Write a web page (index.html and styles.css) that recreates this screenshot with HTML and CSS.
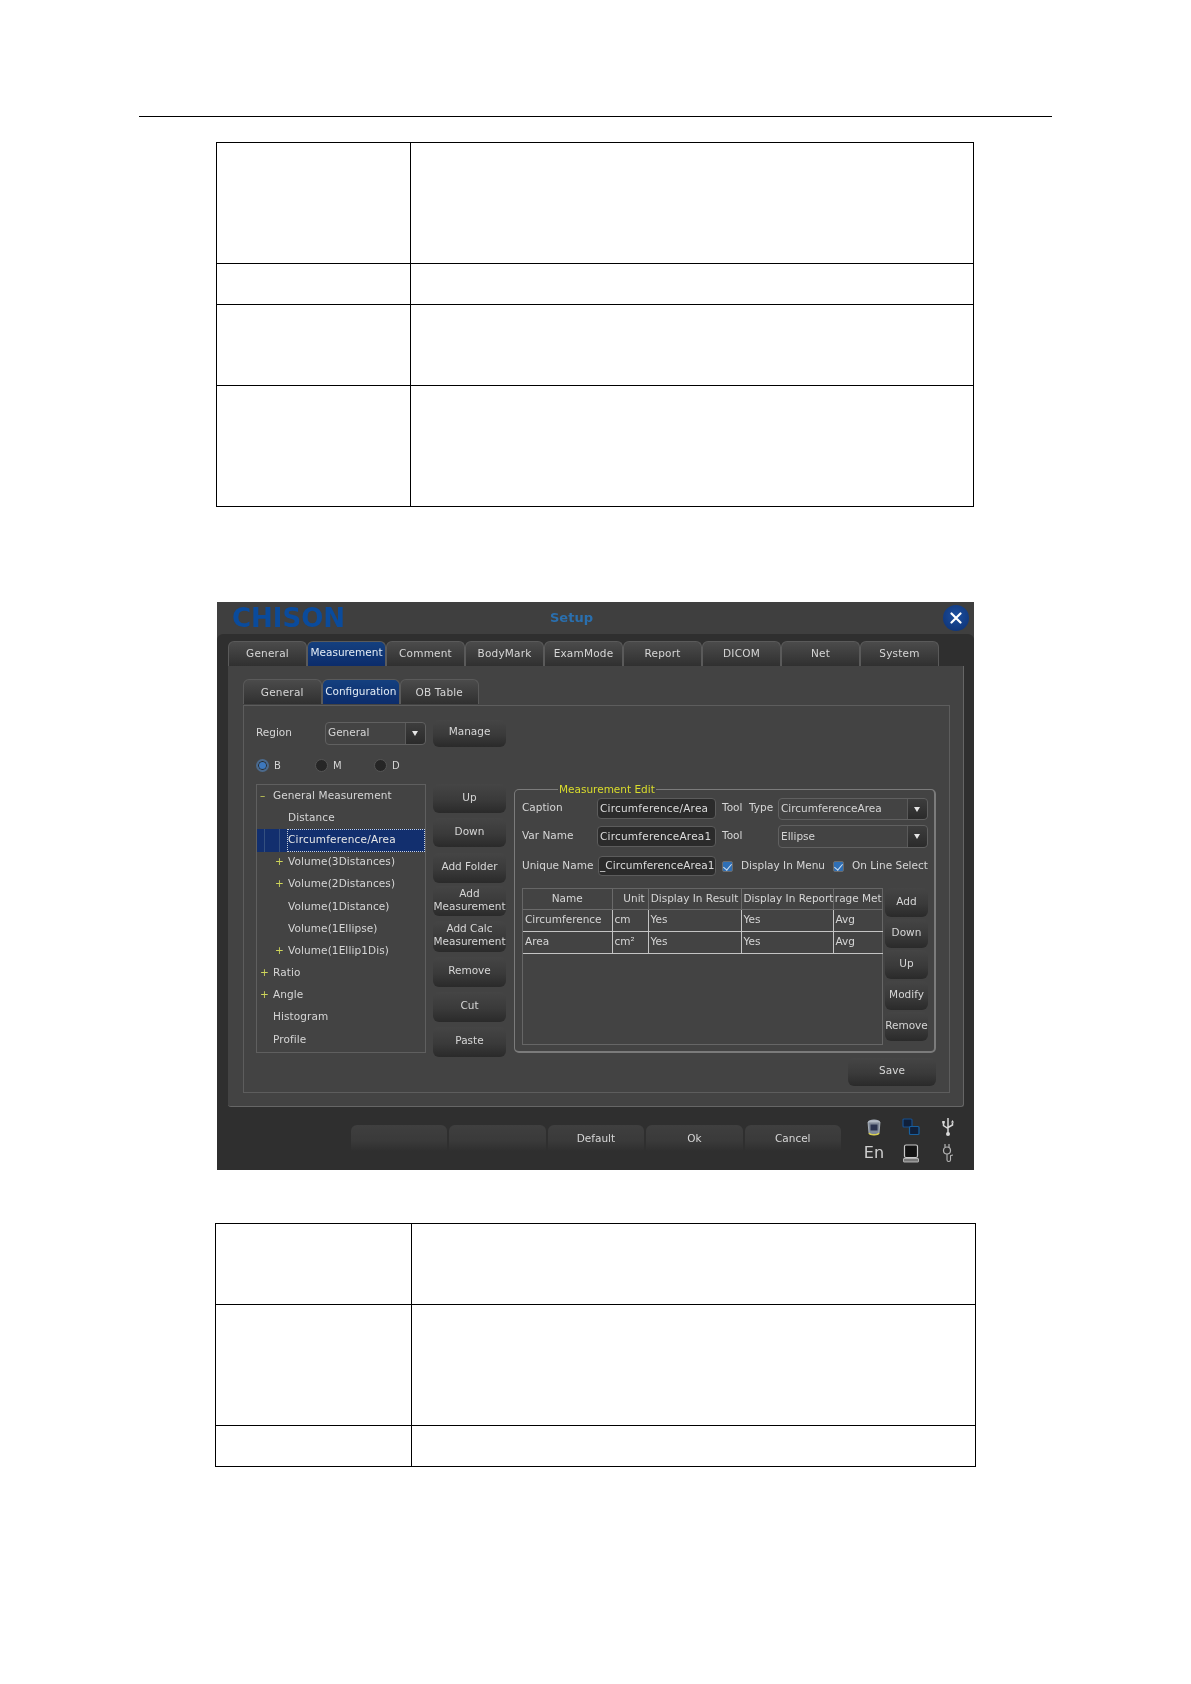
FILE: index.html
```html
<!DOCTYPE html>
<html lang="en">
<head>
<meta charset="utf-8">
<title>Setup</title>
<link rel="stylesheet" href="styles.css">
</head>
<body>
<div class="rule"></div>
<table class="doc doc-top">
  <tr class="h121"><td class="c1"></td><td></td></tr>
  <tr class="h41"><td class="c1"></td><td></td></tr>
  <tr class="h81"><td class="c1"></td><td></td></tr>
  <tr class="h121"><td class="c1"></td><td></td></tr>
</table>

<div class="dialog">
  <div class="titlebar">
    <span class="logo">CHISON</span>
    <span class="title">Setup</span>
    <span class="close">
      <svg width="12" height="12" viewBox="0 0 12 12"><path d="M1.5 1.5L10.5 10.5M10.5 1.5L1.5 10.5" stroke="#fff" stroke-width="2.2" stroke-linecap="round"/></svg>
    </span>
  </div>
  <div class="body">
    <div class="tabs">
      <span class="tab">General</span>
      <span class="tab on">Measurement</span>
      <span class="tab">Comment</span>
      <span class="tab">BodyMark</span>
      <span class="tab">ExamMode</span>
      <span class="tab">Report</span>
      <span class="tab">DICOM</span>
      <span class="tab">Net</span>
      <span class="tab">System</span>
    </div>
    <div class="panel">
      <div class="tabs subtabs">
        <span class="tab">General</span>
        <span class="tab on">Configuration</span>
        <span class="tab">OB Table</span>
      </div>
      <div class="inner">
        <div class="region-row">
          <span class="region-label">Region</span>
          <span class="combo combo-region"><span class="combo-text">General</span><span class="arrow"></span></span>
          <span class="btn btn-main">Manage</span>
        </div>
        <div class="radio-row">
          <span class="radio-item"><span class="radio sel"></span>B</span>
          <span class="radio-item"><span class="radio"></span>M</span>
          <span class="radio-item"><span class="radio"></span>D</span>
        </div>
        <div class="main-row">
          <div class="tree">
            <div class="node lvl0"><span class="mark">–</span><span>General Measurement</span></div>
            <div class="node lvl1"><span class="mark"></span><span>Distance</span></div>
            <div class="node lvl1 picked"><span class="mark"></span><span class="focus">Circumference/Area</span></div>
            <div class="node lvl1"><span class="mark">+</span><span>Volume(3Distances)</span></div>
            <div class="node lvl1"><span class="mark">+</span><span>Volume(2Distances)</span></div>
            <div class="node lvl1"><span class="mark"></span><span>Volume(1Distance)</span></div>
            <div class="node lvl1"><span class="mark"></span><span>Volume(1Ellipse)</span></div>
            <div class="node lvl1"><span class="mark">+</span><span>Volume(1Ellip1Dis)</span></div>
            <div class="node lvl0"><span class="mark">+</span><span>Ratio</span></div>
            <div class="node lvl0"><span class="mark">+</span><span>Angle</span></div>
            <div class="node lvl0"><span class="mark"></span><span>Histogram</span></div>
            <div class="node lvl0"><span class="mark"></span><span>Profile</span></div>
          </div>
          <div class="actions">
            <span class="btn act">Up</span>
            <span class="btn act">Down</span>
            <span class="btn act">Add Folder</span>
            <span class="btn act tight">Add<br>Measurement</span>
            <span class="btn act tight">Add Calc<br>Measurement</span>
            <span class="btn act">Remove</span>
            <span class="btn act">Cut</span>
            <span class="btn act">Paste</span>
          </div>
          <fieldset class="group">
            <legend>Measurement Edit</legend>
            <div class="form-row r1">
              <span class="lbl">Caption</span>
              <span class="input">Circumference/Area</span>
              <span class="lbl2">Tool&nbsp; Type</span>
              <span class="combo combo-wide"><span class="combo-text">CircumferenceArea</span><span class="arrow"></span></span>
            </div>
            <div class="form-row r2">
              <span class="lbl">Var Name</span>
              <span class="input">CircumferenceArea1</span>
              <span class="lbl2">Tool</span>
              <span class="combo combo-wide"><span class="combo-text">Ellipse</span><span class="arrow"></span></span>
            </div>
            <div class="form-row r3">
              <span class="lbl">Unique Name</span>
              <span class="input uniq">_CircumferenceArea1</span>
              <span class="check"></span><span class="chk-label c-a">Display In Menu</span>
              <span class="check"></span><span class="chk-label">On Line Select</span>
            </div>
            <div class="grid-row">
              <div class="grid-box">
                <table class="grid">
                  <colgroup><col class="g1"><col class="g2"><col class="g3"><col class="g4"><col class="g5"></colgroup>
                  <tr class="ghead"><th>Name</th><th class="th-unit">Unit</th><th>Display In Result</th><th>Display In Report</th><th>rage Met</th></tr>
                  <tr><td>Circumference</td><td>cm</td><td>Yes</td><td>Yes</td><td>Avg</td></tr>
                  <tr><td>Area</td><td>cm²</td><td>Yes</td><td>Yes</td><td>Avg</td></tr>
                </table>
              </div>
              <div class="side">
                <span class="btn sbtn">Add</span>
                <span class="btn sbtn">Down</span>
                <span class="btn sbtn">Up</span>
                <span class="btn sbtn">Modify</span>
                <span class="btn sbtn">Remove</span>
              </div>
            </div>
          </fieldset>
        </div>
        <div class="save-row"><span class="btn btn-save">Save</span></div>
      </div>
    </div>
    <div class="footer">
      <div class="foot-btns">
        <span class="btn fbtn"></span>
        <span class="btn fbtn"></span>
        <span class="btn fbtn">Default</span>
        <span class="btn fbtn">Ok</span>
        <span class="btn fbtn">Cancel</span>
      </div>
      <div class="status">
        <span class="st">
          <svg width="14" height="17" viewBox="0 0 14 17"><ellipse cx="7" cy="3" rx="6" ry="2.5" fill="#aeb6c2"/><path d="M1 3L2 14C2.5 16.2 11.5 16.2 12 14L13 3Z" fill="#7f8998" stroke="#b9c1ca" stroke-width=".8"/><rect x="3.5" y="5.5" width="7" height="6" fill="#2a3450"/><path d="M2 14C3 16.4 11 16.4 12 14" stroke="#d8cf52" stroke-width="1.5" fill="none"/></svg>
        </span>
        <span class="st">
          <svg width="18" height="18" viewBox="0 0 18 18"><rect x="1" y="1" width="9" height="8" rx="1" fill="#10203a" stroke="#17508f" stroke-width="1.2"/><rect x="7.5" y="8.5" width="9.5" height="8" rx="1" fill="#10203a" stroke="#17609f" stroke-width="1.2"/></svg>
        </span>
        <span class="st">
          <svg width="14" height="20" viewBox="0 0 14 20"><path d="M7 1V16M2.5 6V8.5L7 11.5M11.5 5.5V8L7 10.5" stroke="#d8d8d8" stroke-width="1.5" fill="none"/><rect x="1.2" y="4" width="2.6" height="2.4" fill="#d8d8d8"/><path d="M10 5.5H13L11.5 3Z" fill="#d8d8d8"/><circle cx="7" cy="17" r="2" fill="#d8d8d8"/></svg>
        </span>
        <span class="st en">En</span>
        <span class="st">
          <svg width="16" height="19" viewBox="0 0 16 19"><rect x="1.5" y="1" width="13" height="12.5" rx="1.5" fill="#141414" stroke="#c9c9c9" stroke-width="1.2"/><rect x="0.5" y="14.5" width="15" height="3.5" rx=".5" fill="#777" stroke="#c9c9c9" stroke-width=".8"/></svg>
        </span>
        <span class="st">
          <svg width="14" height="20" viewBox="0 0 14 20"><path d="M4 1V4M8 1V4" stroke="#b5b5b5" stroke-width="1.2"/><circle cx="6" cy="7.5" r="3.5" fill="none" stroke="#b5b5b5" stroke-width="1.2"/><path d="M6 11V17C6 19 9.5 19 9.5 17V13C9.5 12 11 12 12 12" stroke="#b5b5b5" stroke-width="1.1" fill="none"/></svg>
        </span>
      </div>
    </div>
  </div>
</div>

<table class="doc doc-bottom">
  <tr class="h81"><td class="c1b"></td><td></td></tr>
  <tr class="h121"><td class="c1b"></td><td></td></tr>
  <tr class="h41"><td class="c1b"></td><td></td></tr>
</table>
</body>
</html>
```
FILE: styles.css
```css
* { box-sizing: border-box; }
html, body { margin: 0; padding: 0; background: #fff; }
body { height: 1684px; overflow: hidden; padding-top: 116px; font-family: "DejaVu Sans", sans-serif; }

.rule { height: 1px; margin: 0 139px; background: #000; }

.doc { border-collapse: collapse; table-layout: fixed; }
.doc td { border: 1px solid #000; padding: 0; }
.doc-top { width: 758px; margin: 25px 0 0 216px; }
.doc-bottom { width: 761px; margin: 53px 0 0 215px; }
.c1 { width: 194px; }
.c1b { width: 196px; }
.h121 { height: 121px; }
.h81 { height: 81px; }
.h41 { height: 41px; }

.dialog {
  width: 757px; height: 568px; margin: 95px 0 0 217px;
  display: flex; flex-direction: column;
  background: #3f3f3f; color: #d6d6d6;
  font-size: 10.5px; line-height: 13px;
  filter: blur(0.45px);
}
.titlebar { height: 32px; flex: none; display: flex; align-items: center; padding: 0 5px 0 15px; }
.logo { font-size: 26px; line-height: 30px; font-weight: 700; color: #0a4b9c; width: 114px; }
.title { margin-left: 204px; padding-bottom: 2px; font-size: 13px; font-weight: 700; color: #2a6fae; }
.close {
  margin-left: auto; width: 26px; height: 26px; border-radius: 50%;
  display: flex; align-items: center; justify-content: center;
  background: radial-gradient(circle at 50% 40%, #1c4f9f, #0c2f70);
}

.body { flex: 1; display: flex; flex-direction: column; background: #2f2f2f; border-radius: 6px 6px 0 0; padding: 7px 10px 0 11px; }

.tabs { display: flex; height: 25px; flex: none; }
.tab {
  width: 79px; flex: none; display: flex; align-items: center; justify-content: center;
  border: 1px solid #5a5a5a; border-bottom: 0; border-radius: 6px 6px 0 0;
  background: linear-gradient(#4b4b4b, #303030);
  letter-spacing: 0.2px; padding-bottom: 2px;
}
.tab.on { background: linear-gradient(#14407f, #0c2c6b); color: #e4ecf5; letter-spacing: 0; padding-bottom: 3px; }

.panel { height: 441px; flex: none; background: #434343; border: 1px solid #666; border-width: 0 1px 1px 0; border-radius: 0 0 3px 3px; padding: 13px 13px 0 15px; }
.subtabs .tab { width: 78.5px; padding-bottom: 0; }
.subtabs .tab.on { padding-bottom: 1px; }
.inner { height: 388px; border: 1px solid #5d5d5d; margin-top: 1px; padding: 14px 0 0 12px; }

.btn {
  display: flex; align-items: center; justify-content: center; text-align: center;
  border-radius: 6px; color: #d6d6d6; padding-bottom: 3px;
  background: linear-gradient(#454545, #3a3a3a 55%, #2a2a2a);
}

.region-row { display: flex; align-items: center; height: 27px; }
.region-label { width: 69px; padding-bottom: 2px; }
.combo { display: flex; align-items: stretch; border: 1px solid #606060; border-radius: 4px; height: 23px; }
.combo-text { flex: 1; padding: 0 0 1px 2px; display: flex; align-items: center; }
.arrow { width: 20px; flex: none; position: relative; background: linear-gradient(#3d3d3d, #2b2b2b); border-left: 1px solid #5a5a5a; border-radius: 0 4px 4px 0; }
.arrow::after {
  content: ""; position: absolute; left: 6px; top: 8px;
  border: 3.5px solid transparent; border-top: 5px solid #e6e6e6; border-bottom: 0;
}
.combo-region { width: 101px; }
.combo-region .combo-text { padding-bottom: 2px; }
.btn-main { width: 73px; height: 27px; margin-left: 7px; padding-bottom: 4px; }

.radio-row { display: flex; height: 16px; margin-top: 10px; }
.radio-item { width: 59px; display: flex; align-items: center; gap: 5px; font-size: 10px; }
.radio { width: 13px; height: 13px; border-radius: 50%; background: #262626; border: 1px solid #555; }
.radio.sel { background: #3d78bd; border: 2px solid #4c6a8c; box-shadow: inset 0 0 0 1px #2a2a2a; }

.main-row { display: flex; align-items: flex-start; margin-top: 11px; height: 272px; }
.tree { width: 170px; height: 269px; border: 1px solid #5f5f5f; flex: none; letter-spacing: 0.1px; }
.node { height: 22.2px; display: flex; align-items: center; white-space: nowrap; padding-bottom: 2px; }
.lvl0 { padding-left: 3px; }
.lvl1 { padding-left: 18px; }
.mark { width: 13px; flex: none; color: #cfd65a; }
.picked {
  padding-bottom: 0;
  background:
    linear-gradient(#34507f, #34507f) 7px 0 / 1px 100% no-repeat,
    linear-gradient(#34507f, #34507f) 22px 0 / 1px 100% no-repeat,
    #122f6e;
}
.focus { flex: 1; height: 100%; display: flex; align-items: center; margin-left: -1px; padding: 0 0 2px 1px; outline: 1px dotted #c8d0dc; outline-offset: -1px; color: #e8e8e8; letter-spacing: 0.2px; }

.actions { width: 73px; margin-left: 7px; display: flex; flex-direction: column; flex: none; }
.act { height: 30px; margin-bottom: 5px; }
.act:nth-child(1) { height: 29px; }
.act:nth-child(2) { height: 29px; margin-bottom: 6px; }
.act:nth-child(3) { margin-bottom: 3px; }
.act:nth-child(5) { height: 31px; }
.tight { line-height: 13px; }

.group {
  width: 422px; height: 270px; margin: -1px 0 0 8px; padding: 1px 0 0 7px; min-width: 0; flex: none;
  border: 1px solid #7b7b7b; border-width: 1px 2px 2px 1px; border-radius: 5px;
}
.group legend { margin-left: 36px; padding: 0 1px; font-size: 10.5px; line-height: 12px; color: #d9dc2c; }

.form-row { display: flex; align-items: center; height: 21px; white-space: nowrap; margin-top: 2px; }
.r2 { margin-top: 7px; }
.r3 { margin-top: 9px; height: 20px; }
.lbl { width: 75px; flex: none; padding-bottom: 2px; }
.r3 .lbl { width: 76px; padding-bottom: 1px; }
.input {
  width: 119px; height: 100%; flex: none; padding: 0 0 1px 2px; display: flex; align-items: center;
  border: 1px solid #5c5c5c; border-radius: 4px; background: #2b2b2b; color: #dcdcdc; letter-spacing: 0.22px;
}
.r3 .input { width: 118px; }
.uniq { padding-left: 1px; letter-spacing: 0.1px; }
.lbl2 { width: 62px; flex: none; padding: 0 0 2px 6px; }
.combo-wide { width: 150px; height: 22px; }
.r2 .combo-wide { height: 23px; }
.check { width: 11px; height: 11px; flex: none; margin: 0 8px 0 6px; background: #2f6fb5; border: 1px solid #6a6a6a; border-radius: 2px; position: relative; }
.check::after { content: ""; position: absolute; left: 2px; top: 0; width: 4px; height: 7px; border: solid #cfe0f2; border-width: 0 1.5px 1.5px 0; transform: rotate(40deg); }
.c-a { width: 86px; }
.chk-label { flex: none; padding-bottom: 1px; }

.grid-row { display: flex; margin-top: 12px; }
.grid-box { width: 361px; height: 157px; border: 1px solid #666; flex: none; }
.grid { width: 360px; table-layout: fixed; border-collapse: collapse; }
.g1 { width: 89px; }
.g2 { width: 36px; }
.g3 { width: 93px; }
.g4 { width: 92px; }
.g5 { width: 50px; }
.grid th, .grid td { padding: 0 2px 2px; overflow: hidden; white-space: nowrap; font-weight: 400; }
.grid th { height: 20px; text-align: center; border: 1px solid #6a6a6a; border-top: 0; padding-bottom: 0; }
.grid th:first-child { border-left: 0; }
.grid th:last-child { border-right: 0; padding: 0; }
.th-unit { padding-left: 10px !important; }
.grid td { height: 22px; border: 1px solid #c4c4c4; border-top-color: #888; }
.grid td:first-child { border-left: 0; }
.grid td:last-child { border-right: 0; }

.side { width: 43px; margin-left: 2px; display: flex; flex-direction: column; gap: 2px; flex: none; }
.sbtn { height: 29px; }

.save-row { display: flex; justify-content: flex-end; margin: 2px 13px 0 0; }
.btn-save { width: 88px; height: 28px; padding-bottom: 4px; }

.footer { flex: 1; display: flex; align-items: flex-start; padding: 7px 0 0 123px; }
.foot-btns { display: flex; gap: 2px; margin-top: 11px; }
.fbtn { width: 96.4px; height: 26px; border-radius: 6px 6px 0 0; background: linear-gradient(#3f3f3f, #3a3a3a 60%, #2f2f2f); padding-bottom: 0; }
.status { display: grid; grid-template-columns: repeat(3, 37px); grid-auto-rows: 26px; margin-left: 14.5px; }
.st { display: flex; align-items: center; justify-content: center; }
.en { font-size: 16px; color: #cfcfcf; padding-bottom: 1px; }
```
